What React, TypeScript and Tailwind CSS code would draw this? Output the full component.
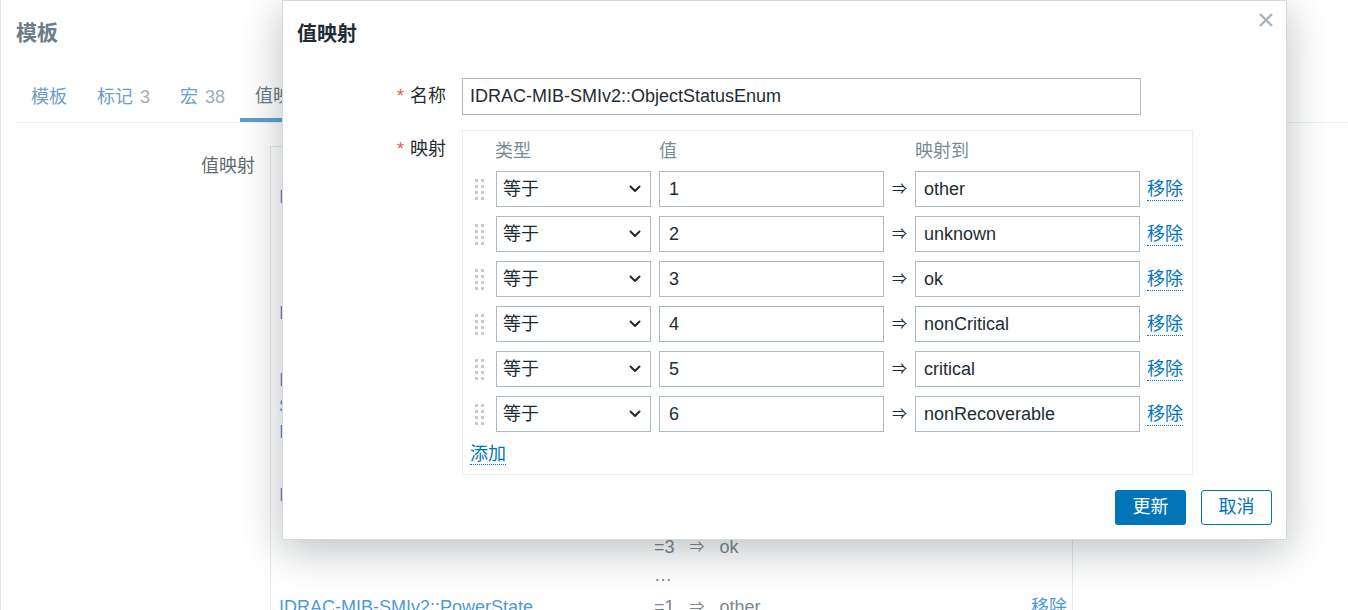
import React from "react";

interface MapRow {
  value: string;
  to: string;
}

const rows: MapRow[] = [
  { value: "1", to: "other" },
  { value: "2", to: "unknown" },
  { value: "3", to: "ok" },
  { value: "4", to: "nonCritical" },
  { value: "5", to: "critical" },
  { value: "6", to: "nonRecoverable" },
];

const DragHandle = () => (
  <div className="grid grid-cols-2 gap-x-[3px] gap-y-[3px]">
    {Array.from({ length: 8 }).map((_, i) => (
      <span key={i} className="block w-[3px] h-[3px] bg-[#c3ccd1]" />
    ))}
  </div>
);

const Chevron = () => (
  <svg width="12" height="8" viewBox="0 0 12 8" fill="none">
    <path d="M1.5 1.5 L6 6 L10.5 1.5" stroke="#1f2c33" strokeWidth="2" strokeLinecap="round" strokeLinejoin="round" />
  </svg>
);

const Row = ({ row }: { row: MapRow }) => (
  <div className="flex items-center h-[36px]">
    <div className="w-[33px] flex justify-center">
      <DragHandle />
    </div>
    <div className="w-[155px] h-[36px] border border-[#acbbc2] flex items-center justify-between pl-[6px] pr-[9px]">
      <span>等于</span>
      <Chevron />
    </div>
    <div className="ml-[8px] w-[225px] h-[36px] border border-[#acbbc2] flex items-center pl-[9px]">{row.value}</div>
    <div className="w-[31px] text-center text-[15px]">⇒</div>
    <div className="w-[225px] h-[36px] border border-[#acbbc2] flex items-center pl-[8px]">{row.to}</div>
    <a className="ml-[7px] text-[#0275b8] border-b border-dotted border-[#0275b8] leading-[22px]">移除</a>
  </div>
);

export default function App() {
  return (
    <div className="relative w-[1348px] h-[610px] overflow-hidden bg-white text-[18px] text-[#1f2c33] font-['Liberation_Sans','Noto_Sans_CJK_SC',sans-serif]">
      {/* page behind the dialog */}
      <div className="h-full border-l border-[#dfe4e7] pl-[15px]">
        <div className="h-[66px] flex items-center text-[21px] font-bold text-[#6d7c86]">模板</div>
        <div className="flex items-end h-[57px] border-b border-[#eef1f2]">
          <div className="flex items-end">
            <span className="px-[15px] pb-[11px] text-[#6f9cc9]">模板</span>
            <span className="px-[15px] pb-[11px] text-[#6f9cc9]">
              标记<span className="ml-[7px] text-[#a3aeb4]">3</span>
            </span>
            <span className="px-[15px] pb-[11px] text-[#6f9cc9]">
              宏<span className="ml-[7px] text-[#a3aeb4]">38</span>
            </span>
            <span className="px-[15px] pb-[8px] text-[#6b7880] border-b-[4px] border-[#5c9fcc]">值映射</span>
          </div>
        </div>
        <div className="flex mt-[23px]">
          <div className="w-[239px] text-right pt-[7px] text-[#5f6b72]">值映射</div>
          <div className="ml-[15px] w-[803px] h-[500px] border-l border-t border-r border-[#e5e9eb] pt-[37px] pl-[8px] text-[#7b868d]">
            <div className="flex h-[116px] leading-[26px]">
              <div className="w-[375px] text-[#8b7fc0]">IDRAC-MIB-SMIv2::BooleanType</div>
            </div>
            <div className="flex h-[67px] leading-[26px]">
              <div className="w-[375px] text-[#8b7fc0]">IDRAC-MIB-SMIv2::DellStatus</div>
            </div>
            <div className="flex h-[115px] leading-[26px]">
              <div className="w-[18px] text-[#8b7fc0]">
                I<br />
                <span className="text-[#4d9ad4]">S</span>
                <br />
                <span className="text-[#4d9ad4]">I</span>
              </div>
            </div>
            <div className="flex h-[112px] leading-[26px]">
              <div className="w-[375px] text-[#8b7fc0]">IDRAC-MIB-SMIv2::ObjectStatusEnum</div>
              <div className="flex flex-col">
                <div className="flex gap-[15px]"><span>=1</span><span className="text-[15px]">⇒</span><span>other</span></div>
                <div className="flex gap-[15px]"><span>=2</span><span className="text-[15px]">⇒</span><span>unknown</span></div>
                <div className="flex gap-[15px]"><span>=3</span><span className="text-[15px]">⇒</span><span>ok</span></div>
                <div className="leading-[30px]">…</div>
              </div>
            </div>
            <div className="flex leading-[26px]">
              <div className="w-[375px] text-[#4d9ad4]">IDRAC-MIB-SMIv2::PowerState</div>
              <div className="flex gap-[15px] w-[377px]"><span>=1</span><span className="text-[15px]">⇒</span><span>other</span></div>
              <span className="text-[#4d9ad4]">移除</span>
            </div>
          </div>
        </div>
      </div>

      {/* dialog */}
      <div className="absolute left-[282px] top-0 w-[1005px] h-[540px] bg-white border border-[#d3d9dd] shadow-[0_10px_40px_rgba(31,44,51,0.3)]">
        <div className="relative h-[66px] flex items-center pl-[14px] text-[20px] font-bold">
          值映射
          <svg className="absolute right-[12px] top-[11px]" width="16" height="16" viewBox="0 0 16 16">
            <path d="M2 2 L14 14 M14 2 L2 14" stroke="#a9b4ba" strokeWidth="2.4" />
          </svg>
        </div>

        <div className="mt-[11px] flex items-center">
          <div className="w-[163px] text-right">
            <span className="text-[#e45959] mr-[6px]">*</span>名称
          </div>
          <div className="ml-[16px] w-[679px] h-[37px] border border-[#acbbc2] flex items-center pl-[7px]">
            IDRAC-MIB-SMIv2::ObjectStatusEnum
          </div>
        </div>

        <div className="mt-[15px] flex items-start">
          <div className="w-[163px] text-right pt-[6px]">
            <span className="text-[#e45959] mr-[6px]">*</span>映射
          </div>
          <div className="ml-[16px] w-[731px] h-[345px] border border-[#ebeef0] pt-[9px]">
            <div className="flex h-[22px] items-center text-[#768d99]">
              <span className="w-[196px] pl-[32px]">类型</span>
              <span className="w-[256px]">值</span>
              <span>映射到</span>
            </div>
            <div className="mt-[9px] flex flex-col gap-[9px]">
              {rows.map((r) => (
                <Row key={r.value} row={r} />
              ))}
            </div>
            <div className="mt-[9px] pl-[7px]">
              <a className="text-[#0275b8] border-b border-dotted border-[#0275b8] leading-[22px]">添加</a>
            </div>
          </div>
        </div>

        <div className="mt-[15px] flex justify-end gap-[15px] pr-[14px]">
          <button className="w-[71px] h-[35px] rounded-[3px] bg-[#0275b8] text-white">更新</button>
          <button className="w-[71px] h-[35px] rounded-[3px] border border-[#0275b8] text-[#0275b8] bg-white">取消</button>
        </div>
      </div>
    </div>
  );
}
